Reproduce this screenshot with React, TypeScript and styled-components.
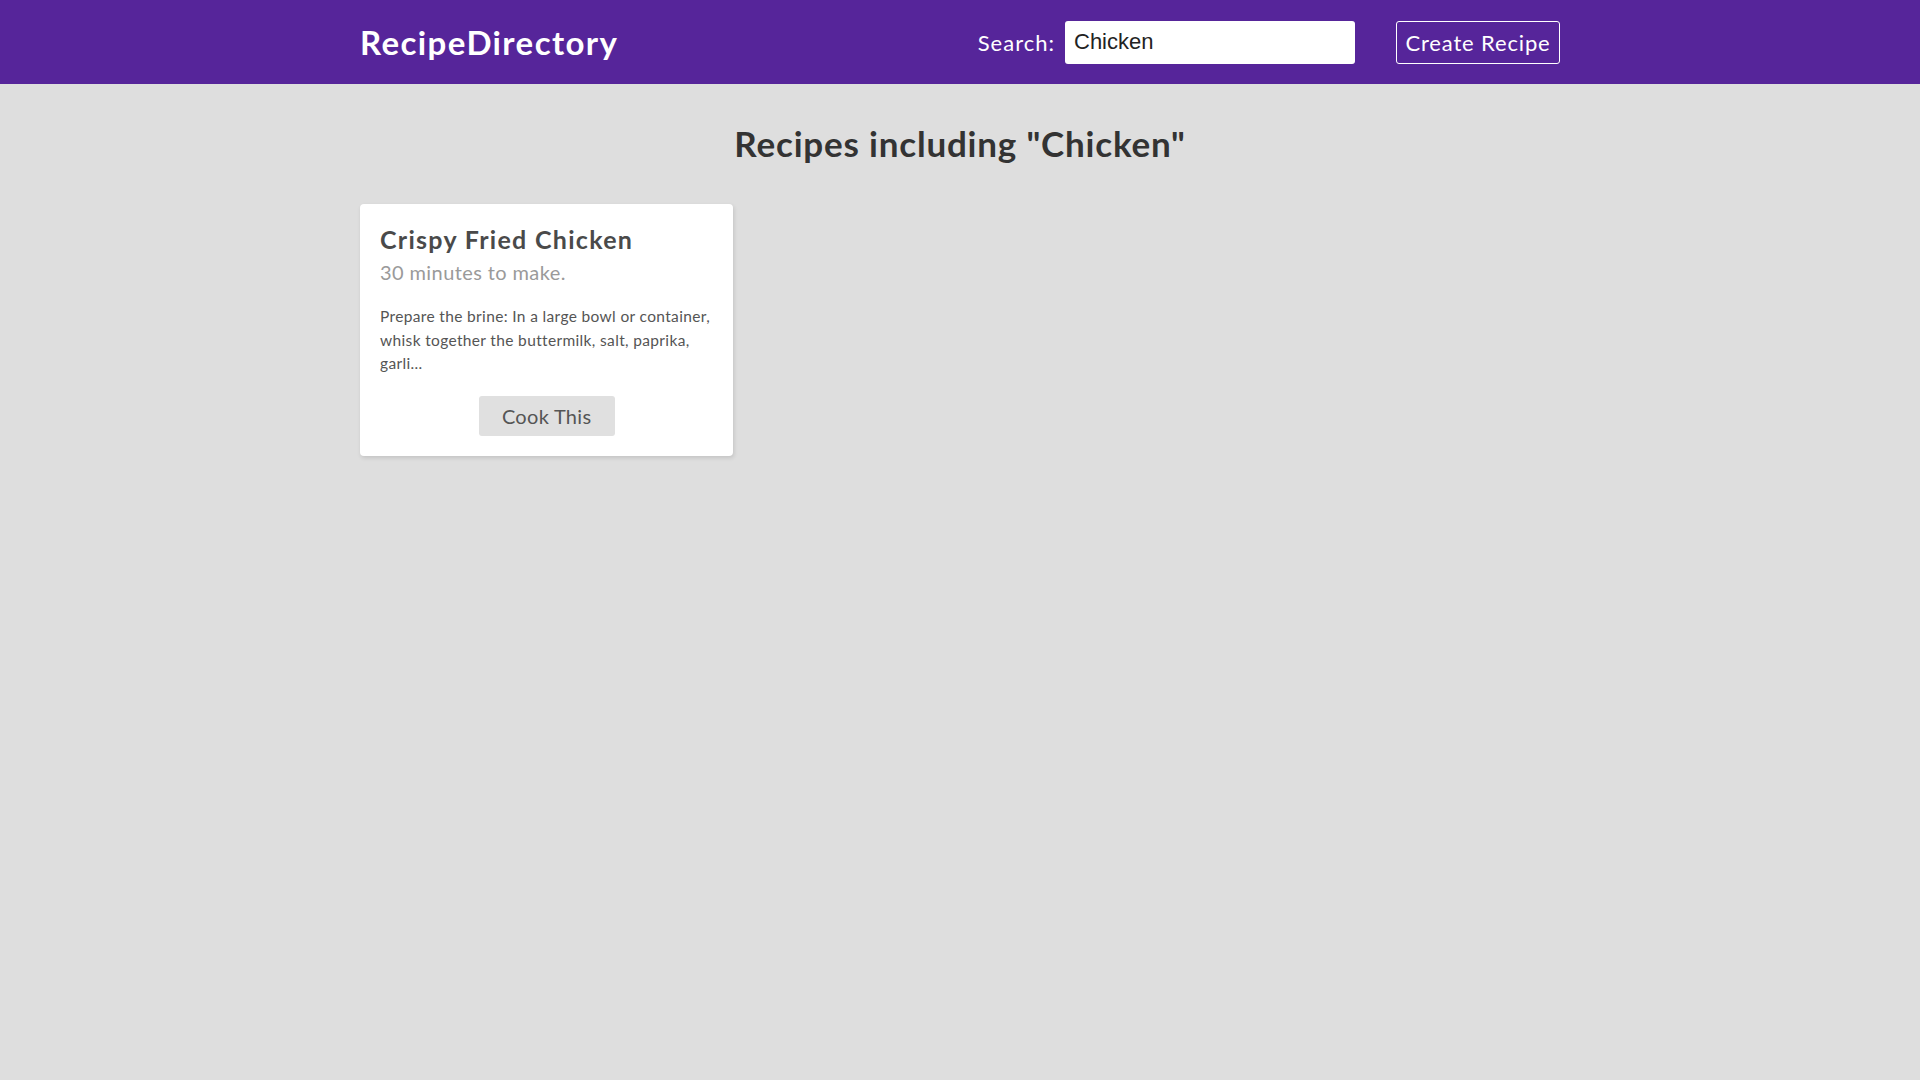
import React from "react";
import styled, { createGlobalStyle } from "styled-components";

const GlobalStyle = createGlobalStyle`
  * { box-sizing: border-box; }
  html, body { margin: 0; padding: 0; }
  body {
    background: #dedede;
    font-family: Lato, "Open Sans", sans-serif;
    color: #333;
    min-height: 100vh;
  }
`;

const Header = styled.header`
  background: #56259a;
  height: 84px;
  display: flex;
  justify-content: center;
`;

const HeaderInner = styled.div`
  width: 1200px;
  display: flex;
  align-items: center;
`;

const Logo = styled.a`
  font-size: 33px;
  font-weight: 700;
  color: #fff;
  text-decoration: none;
  letter-spacing: 1.4px;
  margin-right: auto;
`;

const SearchLabel = styled.label`
  font-size: 22px;
  color: #fff;
  letter-spacing: 1px;
  display: flex;
  align-items: center;
  gap: 10px;
`;

const SearchInput = styled.input`
  width: 290px;
  height: 43px;
  border: none;
  border-radius: 3px;
  padding: 0 9px;
  font-family: "Liberation Sans", Arial, sans-serif;
  font-size: 22px;
  letter-spacing: 0;
  color: #222;
  background: #fff;
  outline: none;
`;

const CreateButton = styled.button`
  margin-left: 41px;
  height: 43px;
  width: 164px;
  background: transparent;
  border: 1px solid #fff;
  border-radius: 3px;
  color: #fff;
  font-family: Lato, "Open Sans", sans-serif;
  font-size: 22px;
  letter-spacing: 0.85px;
  cursor: pointer;
`;

const Main = styled.main`
  width: 1200px;
  margin: 0 auto;
  display: flex;
  flex-direction: column;
`;

const Heading = styled.h1`
  margin: 37.5px 0 40.5px;
  text-align: center;
  font-size: 35px;
  font-weight: 700;
  letter-spacing: 0.8px;
  color: #333;
  line-height: 42px;
`;

const Grid = styled.div`
  display: grid;
  grid-template-columns: repeat(3, 1fr);
  gap: 40px;
`;

const Card = styled.article`
  background: #fff;
  border-radius: 4px;
  box-shadow: 1px 2px 4px rgba(0, 0, 0, 0.12);
  padding: 20px;
  display: flex;
  flex-direction: column;
`;

const CardTitle = styled.h2`
  margin: 0;
  font-size: 25px;
  font-weight: 700;
  letter-spacing: 1.3px;
  color: #4a4a4a;
  line-height: 30px;
`;

const CardTime = styled.p`
  margin: 5px 0 0;
  font-size: 20px;
  letter-spacing: 0.4px;
  color: #9a9a9a;
  line-height: 26px;
`;

const CardText = styled.p`
  margin: 20px 0 0;
  font-size: 15.5px;
  letter-spacing: 0.35px;
  line-height: 23.5px;
  color: #555;
`;

const CookButton = styled.button`
  align-self: center;
  margin-top: 20.5px;
  width: 136px;
  height: 40px;
  border: none;
  border-radius: 3px;
  background: #e0e0e0;
  color: #555;
  font-family: Lato, "Open Sans", sans-serif;
  font-size: 20px;
  letter-spacing: 0.3px;
  cursor: pointer;
`;

export default function App() {
  return (
    <>
      <GlobalStyle />
      <Header>
        <HeaderInner>
          <Logo href="#">RecipeDirectory</Logo>
          <SearchLabel>
            Search:
            <SearchInput defaultValue="Chicken" />
          </SearchLabel>
          <CreateButton>Create Recipe</CreateButton>
        </HeaderInner>
      </Header>
      <Main>
        <Heading>Recipes including "Chicken"</Heading>
        <Grid>
          <Card>
            <CardTitle>Crispy Fried Chicken</CardTitle>
            <CardTime>30 minutes to make.</CardTime>
            <CardText>
              Prepare the brine: In a large bowl or container, whisk together the buttermilk, salt, paprika, garli...
            </CardText>
            <CookButton>Cook This</CookButton>
          </Card>
        </Grid>
      </Main>
    </>
  );
}
